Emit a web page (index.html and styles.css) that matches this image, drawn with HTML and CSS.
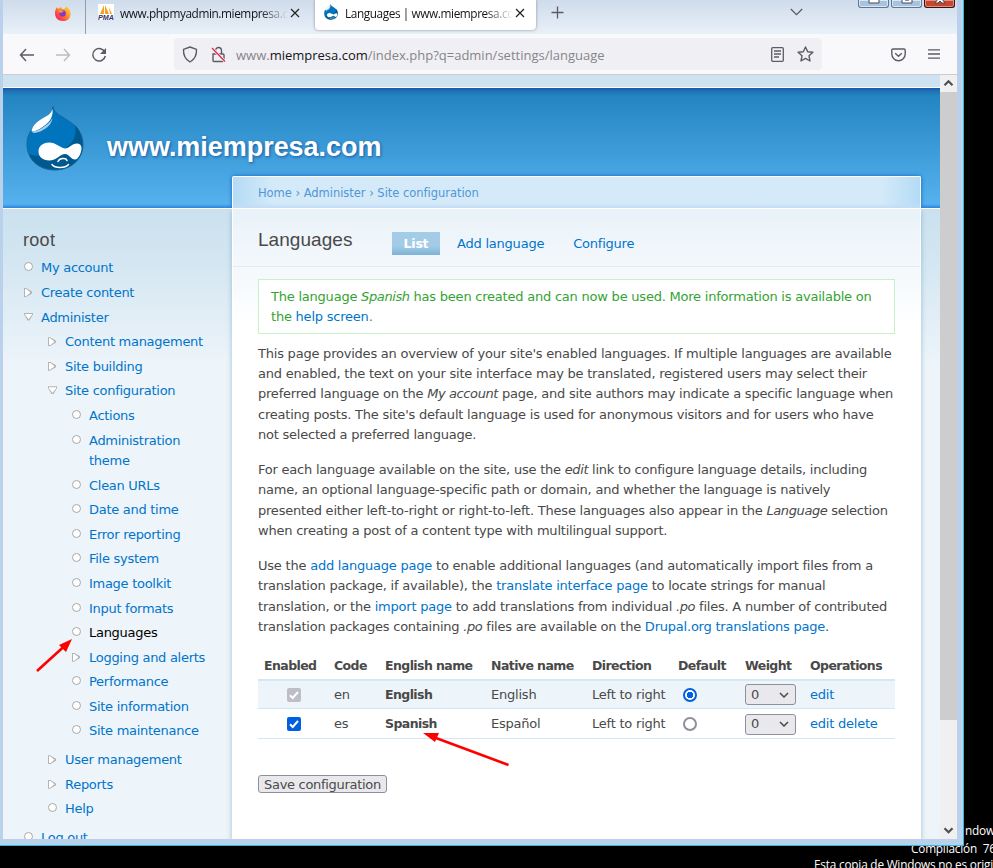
FILE: index.html
```html
<!DOCTYPE html>
<html lang="en">
<head>
<meta charset="utf-8">
<title>Languages | www.miempresa.com</title>
<link rel="stylesheet" href="styles.css">
</head>
<body>
<svg class="defs" width="0" height="0" aria-hidden="true">
  <defs>
    <symbol id="drop" viewBox="0 0 58 65">
      <path d="M27 .5c1 7 7 8.500 14 13.500 10 6 16 13 16 25 0 14-12 25-28 25S1 54 1 38c0-10 6-18 14-23 7-4 11-6 12-14.500z" fill="#0075be" stroke="#1b6294" stroke-width="1"/>
      <path d="M49 19c3 14-6 24-20 28-10 3-19 4-26 1 4 9 13 15.500 26 15.500 16 0 27.500-10.500 27.500-24.500 0-8-3-15-7.500-20z" fill="#00598e"/>
      <path d="M26.500 3c1 9-4 14-10 18-4 3-8 5-11 4 1-5 5-9 10-12 5-3 9-4 11-10z" fill="#fff"/>
      <path d="M5.500 25c4 1 8-1 12-4 4-3 7-5 9-9-1 7-6 10-11 13-5 2-9 3-10 0z" fill="#a7cfe8"/>
      <path d="M12.500 45.500c0-5.500 4.500-9 10.500-9 7 0 11 5 16 6 4 0 7-5 12-5 4.500 0 5 4 4.200 7.500S52 53.500 49 53.500c-4 0-6-5.500-10-5.500-5 0-8 6.500-16 6.500-6 0-10.500-3.500-10.500-9z" fill="#fff"/>
      <path d="M32 55.500c1.500-3.500 8-4 9-1M26 58.500c3 4 13 4 16.500 0" fill="none" stroke="#fff" stroke-width="1.500" stroke-linecap="round"/>
    </symbol>
    <symbol id="close" viewBox="0 0 10 10"><path d="M1 1l8 8M9 1l-8 8" fill="none" stroke="#222" stroke-width="1.2"/></symbol>
    <symbol id="chev" viewBox="0 0 10 6"><path d="M1 1l4 4 4-4" fill="none" stroke="currentColor" stroke-width="1.5"/></symbol>
  </defs>
</svg>

<div class="desktop">
  <div class="watermark"><p class="w1">ndows</p><p class="w2">Compilación&nbsp; 7601</p><p class="w3">Esta copia de Windows no es original</p></div>

  <div class="window">
    <div class="tabbar">
      <div class="pinned">
        <svg width="16" height="16" viewBox="0 0 16 16"><defs><linearGradient id="ff" x1="1" y1="0" x2="0" y2="1"><stop offset="0" stop-color="#ffe14a"/><stop offset=".4" stop-color="#ff9a28"/><stop offset=".75" stop-color="#ff3c4a"/><stop offset="1" stop-color="#e3169a"/></linearGradient></defs><path d="M11 0c0 2 1 2 3 4 3 4 2 12-6 12C3 16 0 13 0 8c0-3 1-4 2-6l1 2 3-2 1 2h2c2-1 2-2 2-4z" fill="url(#ff)"/><circle cx="7.6" cy="8.4" r="3.2" fill="#8438c8"/><path d="M3 5c3-1 4 1 6 1l-3 2-2-1z" fill="#ff9626"/></svg>
      </div>
      <div class="tab pma">
        <svg width="16" height="16" viewBox="0 0 16 16"><path d="M0 0h16v16H0z" fill="#fff"/><path d="M6 1L2 10h4zM7 1l4 9H7zM11 3l3 7h-2z" fill="#f9a11b"/><text x="0" y="15.6" class="pmatext" textLength="16" lengthAdjust="spacingAndGlyphs">PMA</text></svg>
        <span class="tabtitle">www.phpmyadmin.miempresa.c</span>
        <svg class="x" width="10" height="10"><use href="#close"/></svg>
      </div>
      <div class="tab active">
        <svg width="14" height="16"><use href="#drop"/></svg>
        <span class="tabtitle">Languages | www.miempresa.com</span>
        <svg class="x" width="10" height="10"><use href="#close"/></svg>
      </div>
      <svg class="plus" width="13" height="13" viewBox="0 0 13 13"><path d="M6.5 .5v12M.5 6.5h12" stroke="#5b5b66" stroke-width="1.3"/></svg>
      <svg class="alltabs" width="13" height="8" viewBox="0 0 13 8"><path d="M.8 1l5.700 5.700L12.200 1" fill="none" stroke="#5b5b66" stroke-width="1.3"/></svg>
      <div class="controls">
        <i><svg width="12" height="4"><path d="M1-2h10v5H1z" fill="#fff" stroke="#434c58"/></svg></i>
        <i><svg width="12" height="4"><path d="M1-2h10v5H1z" fill="#fff" stroke="#434c58"/><path d="M4-2h4v3H4z" fill="#7f91a6"/></svg></i>
        <i class="red"><svg width="12" height="4"><path d="M1 3l3-4h4l3 4H8L6 1 4 3z" fill="#fff" stroke="#434c58"/></svg></i>
      </div>
    </div>

    <div class="toolbar">
      <svg class="back" width="16" height="14" viewBox="0 0 16 14"><path d="M7 1L1.500 7 7 13M1.500 7H15" fill="none" stroke="#5b5b66" stroke-width="1.4"/></svg>
      <svg class="fwd" width="16" height="14" viewBox="0 0 16 14"><path d="M9 1l5.500 6L9 13M14.500 7H1" fill="none" stroke="#bbbbc2" stroke-width="1.4"/></svg>
      <svg class="reload" width="16" height="16" viewBox="0 0 16 16"><path d="M14 5.500A6.300 6.300 0 1 0 14.300 9" fill="none" stroke="#5b5b66" stroke-width="1.5"/><path d="M15 1v6H9z" fill="#5b5b66"/></svg>
      <div class="urlbar">
        <svg class="shield" width="16" height="17" viewBox="0 0 16 17"><path d="M8 1l6.500 2.300c.3 6-1.500 10-6.500 12.700C3 13.300 1.200 9.300 1.500 3.300z" fill="none" stroke="#5b5b66" stroke-width="1.4" stroke-linejoin="round"/></svg>
        <svg class="lock" width="15" height="17" viewBox="0 0 15 17"><path d="M2.500 8h9.500q1 0 1 1v5.500q0 1-1 1H3q-1 0-1-1V8zM4.500 8V5a3 3.500 0 0 1 6 0v3" fill="none" stroke="#5b5b66" stroke-width="1.400"/><path d="M1 2l13 13.500" stroke="#f0f0f4" stroke-width="3"/><path d="M1 2l13 13.500" stroke="#e22850" stroke-width="1.300"/></svg>
        <span class="url">www.<b>miempresa.com</b>/index.php?q=admin/settings/language</span>
        <svg class="reader" width="13" height="15" viewBox="0 0 13 15"><path d="M1.700.7h9.600q1 0 1 1v11.600q0 1-1 1H1.700q-1 0-1-1V1.700q0-1 1-1zM3 4h7M3 7h7M3 10h5" fill="none" stroke="#5b5b66" stroke-width="1.300"/></svg>
        <svg class="star" width="17" height="16" viewBox="0 0 17 16"><path d="M8.500 1l2.200 4.700 5.200.6-3.900 3.500 1 5.200-4.500-2.600L4 15l1-5.200L1.100 6.300l5.200-.6z" fill="none" stroke="#5b5b66" stroke-width="1.400" stroke-linejoin="round"/></svg>
      </div>
      <svg class="pocket" width="15" height="14" viewBox="0 0 15 14"><path d="M2 1h11q1.200 0 1.200 1.200V6a6.700 6.800 0 0 1-13.400 0V2.200Q.8 1 2 1zM4.200 5.200l3.300 3 3.300-3" fill="none" stroke="#5b5b66" stroke-width="1.400"/></svg>
      <svg class="menuicon" width="12" height="10" viewBox="0 0 12 10"><path d="M0 .8h12M0 5h12M0 9.200h12" stroke="#5b5b66" stroke-width="1.300"/></svg>
    </div>

    <div class="viewport">
      <div class="page">
        <div class="strip"></div>
        <header class="header">
          <div class="brand">
            <svg class="logo" width="58" height="65"><use href="#drop"/></svg>
            <h1>www.miempresa.com</h1>
          </div>
          <nav class="crumbs"><a>Home</a> › <a>Administer</a> › <a>Site configuration</a></nav>
        </header>
        <div class="columns">
          <aside class="sidebar">
            <h2>root</h2>
            <ul class="menu">
              <li class="leaf"><a>My account</a></li>
              <li class="closed"><a>Create content</a></li>
              <li class="open"><a>Administer</a>
                <ul>
                  <li class="closed"><a>Content management</a></li>
                  <li class="closed"><a>Site building</a></li>
                  <li class="open"><a>Site configuration</a>
                    <ul>
                      <li class="leaf"><a>Actions</a></li>
                      <li class="leaf"><a>Administration<br>theme</a></li>
                      <li class="leaf"><a>Clean URLs</a></li>
                      <li class="leaf"><a>Date and time</a></li>
                      <li class="leaf"><a>Error reporting</a></li>
                      <li class="leaf"><a>File system</a></li>
                      <li class="leaf"><a>Image toolkit</a></li>
                      <li class="leaf"><a>Input formats</a></li>
                      <li class="leaf"><a class="current">Languages</a></li>
                      <li class="closed"><a>Logging and alerts</a></li>
                      <li class="leaf"><a>Performance</a></li>
                      <li class="leaf"><a>Site information</a></li>
                      <li class="leaf"><a>Site maintenance</a></li>
                    </ul>
                  </li>
                  <li class="closed"><a>User management</a></li>
                  <li class="closed"><a>Reports</a></li>
                  <li class="leaf"><a>Help</a></li>
                </ul>
              </li>
              <li class="leaf"><a>Log out</a></li>
            </ul>
          </aside>
          <main class="panel">
            <div class="titlebar">
              <h2>Languages</h2>
              <a class="sel">List</a><a class="add">Add language</a><a>Configure</a>
            </div>
            <div class="status">The language <em>Spanish</em> has been created and can now be used. More information is available on<br>the <a>help screen</a>.</div>
            <p>This page provides an overview of your site's enabled languages. If multiple languages are available<br>and enabled, the text on your site interface may be translated, registered users may select their<br>preferred language on the <em>My account</em> page, and site authors may indicate a specific language when<br>creating posts. The site's default language is used for anonymous visitors and for users who have<br>not selected a preferred language.</p>
            <p>For each language available on the site, use the <em>edit</em> link to configure language details, including<br>name, an optional language-specific path or domain, and whether the language is natively<br>presented either left-to-right or right-to-left. These languages also appear in the <em>Language</em> selection<br>when creating a post of a content type with multilingual support.</p>
            <p>Use the <a>add language page</a> to enable additional languages (and automatically import files from a<br>translation package, if available), the <a>translate interface page</a> to locate strings for manual<br>translation, or the <a>import page</a> to add translations from individual <em>.po</em> files. A number of contributed<br>translation packages containing <em>.po</em> files are available on the <a>Drupal.org translations page</a>.</p>
            <table>
              <colgroup><col class="c1"><col class="c2"><col class="c3"><col class="c4"><col class="c5"><col class="c6"><col class="c7"><col class="c8"></colgroup>
              <thead><tr><th>Enabled</th><th>Code</th><th>English name</th><th>Native name</th><th>Direction</th><th>Default</th><th>Weight</th><th>Operations</th></tr></thead>
              <tbody>
                <tr class="odd"><td class="mid"><svg class="check off" width="14" height="14" viewBox="0 0 14 14"><path d="M3 7.300l2.700 2.700L11 4" fill="none" stroke="#fff" stroke-width="2"/></svg></td><td>en</td><td><strong>English</strong></td><td>English</td><td>Left to right</td><td class="rad"><i class="radio on"></i></td><td><span class="select">0<svg width="10" height="6"><use href="#chev"/></svg></span></td><td><a>edit</a></td></tr>
                <tr class="even"><td class="mid"><svg class="check" width="14" height="14" viewBox="0 0 14 14"><path d="M3 7.300l2.700 2.700L11 4" fill="none" stroke="#fff" stroke-width="2"/></svg></td><td>es</td><td><strong>Spanish</strong></td><td>Español</td><td>Left to right</td><td class="rad"><i class="radio"></i></td><td><span class="select">0<svg width="10" height="6"><use href="#chev"/></svg></span></td><td><a>edit</a> <a>delete</a></td></tr>
              </tbody>
            </table>
            <button class="save">Save configuration</button>
          </main>
        </div>
      </div>
      <div class="scrollbar">
        <svg width="17" height="17" viewBox="0 0 17 17"><path d="M4.500 10.300l4-4 4 4" fill="none" stroke="#505050" stroke-width="2.200"/></svg>
        <div class="thumb"></div>
        <svg width="17" height="17" viewBox="0 0 17 17"><path d="M4.500 6.300l4 4 4-4" fill="none" stroke="#505050" stroke-width="2.200"/></svg>
      </div>
    </div>
  </div>
  <svg class="arrows" width="993" height="868" viewBox="0 0 993 868"><g fill="red" stroke="red"><path d="M37 671L64 646.500M508.500 765L436 738" stroke-width="2.600" fill="none"/><path d="M72 639l-6 13-7-7zM423 733l16 0-4 9z" stroke="none"/></g></svg>
</div>
</body>
</html>
```
FILE: styles.css
```css
* { box-sizing: border-box; }
body { margin: 0; background: #000; overflow: hidden; font: 13px/20.4px "DejaVu Sans", sans-serif; letter-spacing: -.22px; color: #494949; }
h1, h2, p, ul { margin: 0; padding: 0; font-weight: normal; }
svg { display: block; flex: none; }
a { color: #0074cb; }
.defs { position: absolute; }
.desktop { position: relative; width: 993px; height: 868px; overflow: hidden; }

.watermark { position: absolute; right: 0; top: 0; color: #fff; font: 11.800px/16px "Open Sans", sans-serif; letter-spacing: -.2px; width: 993px; height: 868px; }
.watermark p { position: absolute; white-space: nowrap; }
.w1 { left: 965px; top: 822px; }
.w2 { left: 911px; top: 840px; }
.w3 { left: 814px; top: 856px; }

.window { position: relative; width: 964px; height: 846px; padding: 0 6px 6px 3px; background: #b9d1ea; border: solid #38b8d8; border-width: 0 1px 1px 0; }

.tabbar { display: flex; height: 34px; background: linear-gradient(#cfdceb, #e9f0f8); font: 11.800px/16px "Open Sans", sans-serif; letter-spacing: -.4px; color: #15141a; }
.pinned { width: 83px; border-right: 1px solid #939dab; padding: 5px 0 0 52px; }
.tab { display: flex; padding-top: 4px; }
.pma { width: 228px; padding-left: 12px; }
.pmatext { font: italic bold 6.500px "Liberation Sans", sans-serif; letter-spacing: 0; fill: #33336b; }
.tabtitle { overflow: hidden; white-space: nowrap; padding-top: 1px; -webkit-mask-image: linear-gradient(90deg, #000 calc(100% - 28px), transparent); mask-image: linear-gradient(90deg, #000 calc(100% - 28px), transparent); }
.pma .tabtitle { margin-left: 6px; width: 168px; }
.x { margin: 4px 0 0 2px; }
.active { width: 221px; height: 30px; margin-left: 1px; padding-left: 9px; background: #fff; border-radius: 0 0 4px 4px; box-shadow: 0 0 3px #7f8b9b; }
.active .tabtitle { margin-left: 7px; width: 168px; }
.plus { margin: 6px 0 0 15px; }
.alltabs { margin: 8px 0 0 226px; }
.controls { display: flex; gap: 2px; margin-left: auto; padding-right: 2px; }
.controls i { width: 31px; height: 8px; border: 1px solid #5c7794; border-top: 0; border-radius: 0 0 3px 3px; background: #a9c3de; box-shadow: inset 0 0 0 1px #d9e6f3; padding-left: 9px; }
.controls .red { background: #c6452d; border-color: #3c1010; box-shadow: inset 0 0 0 1px #e19182; }

.toolbar { display: flex; height: 41px; background: #f9f9fb; border-bottom: 1px solid #ccc; }
.back { margin: 14px 0 0 16px; }
.fwd { margin: 14px 0 0 20px; }
.reload { margin: 13px 0 0 20px; }
.urlbar { display: flex; width: 648px; height: 32px; margin: 4px 0 0 67px; padding-left: 8px; background: #f0f0f4; border-radius: 4px; }
.shield { margin-top: 8px; }
.lock { margin: 8px 0 0 13px; }
.url { width: 525px; margin: 7px 0 0 10px; font: 13px/20px "Open Sans", sans-serif; letter-spacing: 0; color: #85858c; white-space: nowrap; }
.url b { font-weight: normal; color: #15141a; }
.reader { margin: 9px 0 0 10px; }
.star { margin: 8px 0 0 13px; }
.pocket { margin: 14px 0 0 69px; }
.menuicon { margin: 15px 0 0 22px; }

.viewport { display: flex; height: 764px; overflow: hidden; }
.page { width: 937px; height: 764px; overflow: hidden; background: #edf4fa; }
.strip { height: 13px; background: #cde3f1; border-bottom: 1px solid #fff; }
.header { height: 121px; border-bottom: 1px solid #fff; background: linear-gradient(#1a57a8 0, #2072b5 3px, #2385c2 8px, #54b0ec 112px, #55b1ee 116px, #2c84dc 120px); }
.brand { display: flex; height: 88px; padding: 18px 0 0 23px; }
.brand h1 { margin: 25px 0 0 23px; font: bold 27px/32px "Liberation Sans", sans-serif; letter-spacing: -.04px; color: #fff; text-shadow: 1px 1px 3px #1659a0; white-space: nowrap; }
.crumbs { width: 689px; height: 32px; margin-left: 229px; padding: 6px 0 0 25px; border: 1px solid #fff; border-bottom: 0; background: linear-gradient(transparent 26px, #c4dcf5), linear-gradient(90deg, #b4dbf5, #d4eaf9 40px, #d4eaf9 648px, #b4dbf5); box-shadow: 0 0 4px #1764c8; clip-path: inset(-5px -5px 0 -5px); font-size: 11.500px; line-height: 21px; letter-spacing: -.03px; color: #5294cd; white-space: nowrap; border-radius: 2px 2px 0 0; }
.crumbs a { color: #5096d8; }
.columns { display: flex; height: 630px; background: linear-gradient(#cbe1ef, #d3e6f1 50px, #edf4fa 155px); }
.sidebar { width: 229px; padding: 19px 0 0 20px; }
.sidebar h2 { font: 18px/24px "Liberation Sans", sans-serif; letter-spacing: .3px; }
.menu { padding: 6.400px 0 0 18px; }
.menu ul { margin-top: 4.200px; padding-left: 24px; }
li { position: relative; list-style: none; padding-bottom: 4.200px; white-space: nowrap; letter-spacing: -.28px; }
li::before { content: ""; position: absolute; left: -17px; top: 4px; width: 7px; height: 7px; }
li a { display: block; }
.leaf::before { border: 1px solid #a8a8a8; border-radius: 50%; background: #fff; }
.closed::before { left: -17px; width: 8px; height: 9px; top: 5px; background: #b4b4b4; clip-path: polygon(0 0, 25% 0, 100% 40%, 100% 60%, 25% 100%, 0 100%); }
.closed::after { content: ""; position: absolute; left: -16px; top: 6px; width: 6px; height: 7px; background: #fff; clip-path: polygon(0 0, 20% 0, 92% 50%, 20% 100%, 0 100%); }
.open::before { left: -17px; width: 9px; height: 8px; top: 5px; background: #b4b4b4; clip-path: polygon(0 0, 100% 0, 100% 20%, 60% 100%, 40% 100%, 0 20%); }
.open::after { content: ""; position: absolute; left: -16px; top: 6px; width: 7px; height: 6px; background: #fff; clip-path: polygon(0 0, 100% 0, 100% 15%, 50% 95%, 0 15%); }
.menu .current { color: #000; }

.panel { width: 689px; padding: 0 25px; border: 1px solid #fff; border-top: 0; background: linear-gradient(#e9f2f9, #fff 120px); box-shadow: 0 2px 5px rgba(80, 140, 180, .5); clip-path: inset(0 -6px 0 -6px); white-space: nowrap; }
.titlebar { display: flex; height: 58px; margin: 0 -25px; padding: 20px 0 0 25px; border-bottom: 1px solid #e5ecf1; }
.titlebar h2 { width: 134px; font: 19px/22px "Liberation Sans", sans-serif; letter-spacing: .05px; }
.titlebar a { margin-top: 3px; height: 23px; line-height: 24px; }
.titlebar .sel { width: 48px; text-align: center; font-weight: bold; font-size: 12.500px; color: #fff; background: linear-gradient(#a3cce7 60%, #7db3d8); }
.titlebar .add { margin: 3px 29px 0 17px; }
.status { height: 55px; margin: 12px 0 9.600px; padding: 7px 12px; border: 1px solid #c7f2c8; background: #fff; color: #33a333; }
.panel p { margin-bottom: 14.300px; }
em { letter-spacing: -.4px; }
table { width: 637px; margin-top: 16.500px; border-collapse: collapse; table-layout: fixed; }
th, strong { font-size: 12.500px; letter-spacing: -.58px; }
th { height: 26px; padding: 0 6px; text-align: left; border-bottom: 2px solid #d3e7f4; }
td { height: 29px; padding: 0 6px; border-bottom: 1px solid #d3e7f4; }
.odd { background: #edf5fa; }
.even td { height: 30px; padding-top: 1px; }
.c1 { width: 70px; } .c2 { width: 51px; } .c3 { width: 106px; } .c4 { width: 101px; }
.c5 { width: 86px; } .c6 { width: 67px; } .c7 { width: 65px; } .c8 { width: 91px; }
.mid svg { margin-left: 23px; }
.check { background: #0060df; border-radius: 2px; }
.off { background: #bdbec6; }
.radio { display: block; width: 14px; height: 14px; margin-left: 5px; border: 2px solid #8f8f9d; border-radius: 50%; background: #fff; }
.on { border-color: #0060df; background: radial-gradient(circle, #0060df 3px, #fff 3.500px); }
.select { display: flex; align-items: center; justify-content: space-between; width: 51px; height: 21px; padding: 0 6px 0 5px; border: 1px solid #8f8f9d; border-radius: 3px; background: #e9e9ed; }
.save { display: block; width: 129px; height: 18px; margin-top: 36px; padding: 0; border: 1px solid #8f8f9d; border-radius: 3px; background: #e9e9ed; color: #494949; font: 13px/15px "DejaVu Sans", sans-serif; letter-spacing: -.3px; }

.scrollbar { width: 17px; height: 764px; display: flex; flex-direction: column; background: #f0f0f0; }
.thumb { height: 628px; margin-bottom: auto; background: #cdcdcd; }
.arrows { position: absolute; left: 0; top: 0; }
```
